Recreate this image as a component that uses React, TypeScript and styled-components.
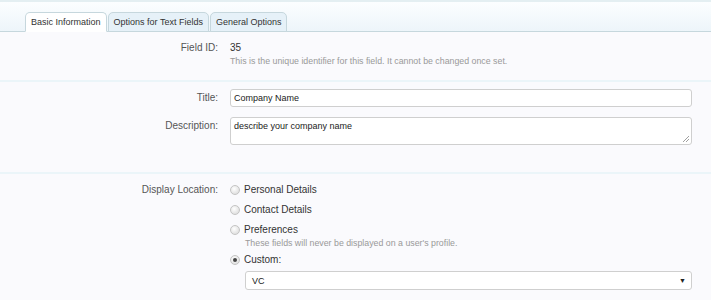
import styled, { createGlobalStyle } from "styled-components";

const Global = createGlobalStyle`
  body {
    margin: 0;
    background: #fafafd;
    font-family: "Liberation Sans", Tahoma, sans-serif;
    color: #333;
  }
`;

const Page = styled.div`
  width: 711px;
  height: 300px;
  overflow: hidden;
  background: #fafafd;
`;

const TabBar = styled.div`
  display: flex;
  align-items: flex-end;
  height: 29px;
  padding-left: 25px;
  border-top: 2px solid #e4eff2;
  border-bottom: 1px solid #c6d7dd;
  background: linear-gradient(to bottom, #fcfeff, #edf5fa);
`;

const Tab = styled.div<{ active?: boolean }>`
  height: 18px;
  line-height: 18px;
  padding: 0 5px;
  margin-right: 1px;
  margin-bottom: -1px;
  font-size: 9px;
  color: #333;
  border: 1px solid #c6d7dd;
  border-bottom: 1px solid ${(p) => (p.active ? "#fff" : "#c6d7dd")};
  border-radius: 5px 5px 0 0;
  background: ${(p) => (p.active ? "#fff" : "#e6f1f8")};
`;

const Section = styled.div<{ pad?: string }>`
  padding: ${(p) => p.pad || "8px 0"};
  border-bottom: 2px solid #ebf5f9;
`;

const Row = styled.div`
  display: grid;
  grid-template-columns: 218px 1fr;
  column-gap: 12px;
  margin-right: 19px;
  margin-bottom: 10px;
  &:last-child {
    margin-bottom: 0;
  }
`;

const Label = styled.div`
  text-align: right;
  font-size: 10px;
  color: #555;
  line-height: 17px;
`;

const Value = styled.div`
  font-size: 10px;
  line-height: 17px;
  color: #333;
`;

const Hint = styled.div<{ indent?: boolean }>`
  font-size: 8.8px;
  color: #999;
  line-height: 10px;
  margin-left: ${(p) => (p.indent ? "15px" : "0")};
`;

const TextInput = styled.div`
  box-sizing: border-box;
  height: 18px;
  line-height: 16px;
  padding: 0 3px;
  font-size: 9px;
  color: #222;
  background: #fff;
  border: 1px solid #cfcfcf;
  border-radius: 3px;
`;

const TextArea = styled(TextInput)`
  position: relative;
  height: 28px;
  padding-top: 2px;
  line-height: 12px;
`;

const Grip = styled.svg`
  position: absolute;
  right: 2px;
  bottom: 2px;
`;

const Choices = styled.div`
  display: flex;
  flex-direction: column;
`;

const Choice = styled.div<{ tight?: boolean; lift?: boolean }>`
  display: flex;
  align-items: center;
  gap: 4px;
  height: 17px;
  font-size: 10px;
  color: #333;
  margin-bottom: ${(p) => (p.tight ? "0" : "3px")};
  margin-top: ${(p) => (p.lift ? "3px" : "0")};
`;

const Radio = styled.span<{ checked?: boolean }>`
  box-sizing: border-box;
  width: 10px;
  height: 10px;
  border-radius: 50%;
  border: 1px solid #c4c4c4;
  background: radial-gradient(circle at 40% 35%, #fff, #d6d6d6);
  display: flex;
  align-items: center;
  justify-content: center;
  &::after {
    content: "";
    display: ${(p) => (p.checked ? "block" : "none")};
    width: 4px;
    height: 4px;
    border-radius: 50%;
    background: #444;
  }
`;

const Select = styled.div`
  box-sizing: border-box;
  margin: 0 0 0 15px;
  height: 19px;
  display: flex;
  align-items: center;
  justify-content: space-between;
  padding: 0 5px 0 6px;
  font-size: 9px;
  color: #222;
  background: #fff;
  border: 1px solid #cfcfcf;
  border-radius: 3px;
`;

const Caret = styled.span`
  font-size: 7px;
  color: #222;
`;

export default function App() {
  return (
    <Page>
      <Global />
      <TabBar>
        <Tab active>Basic Information</Tab>
        <Tab>Options for Text Fields</Tab>
        <Tab>General Options</Tab>
      </TabBar>

      <Section pad="7px 0 14px">
        <Row>
          <Label>Field ID:</Label>
          <div>
            <Value>35</Value>
            <Hint>This is the unique identifier for this field. It cannot be changed once set.</Hint>
          </div>
        </Row>
      </Section>

      <Section pad="7px 0 27px">
        <Row>
          <Label>Title:</Label>
          <TextInput>Company Name</TextInput>
        </Row>
        <Row>
          <Label>Description:</Label>
          <TextArea>
            describe your company name
            <Grip width="6" height="6" viewBox="0 0 6 6">
              <path d="M6 0L0 6M6 3L3 6" stroke="#888" strokeWidth="0.8" />
            </Grip>
          </TextArea>
        </Row>
      </Section>

      <Section pad="7px 0 10px">
        <Row>
          <Label>Display Location:</Label>
          <Choices>
            <Choice>
              <Radio />
              Personal Details
            </Choice>
            <Choice>
              <Radio />
              Contact Details
            </Choice>
            <Choice tight>
              <Radio />
              Preferences
            </Choice>
            <Hint indent>These fields will never be displayed on a user's profile.</Hint>
            <Choice lift>
              <Radio checked />
              Custom:
            </Choice>
            <Select>
              VC
              <Caret>▼</Caret>
            </Select>
          </Choices>
        </Row>
      </Section>
    </Page>
  );
}
